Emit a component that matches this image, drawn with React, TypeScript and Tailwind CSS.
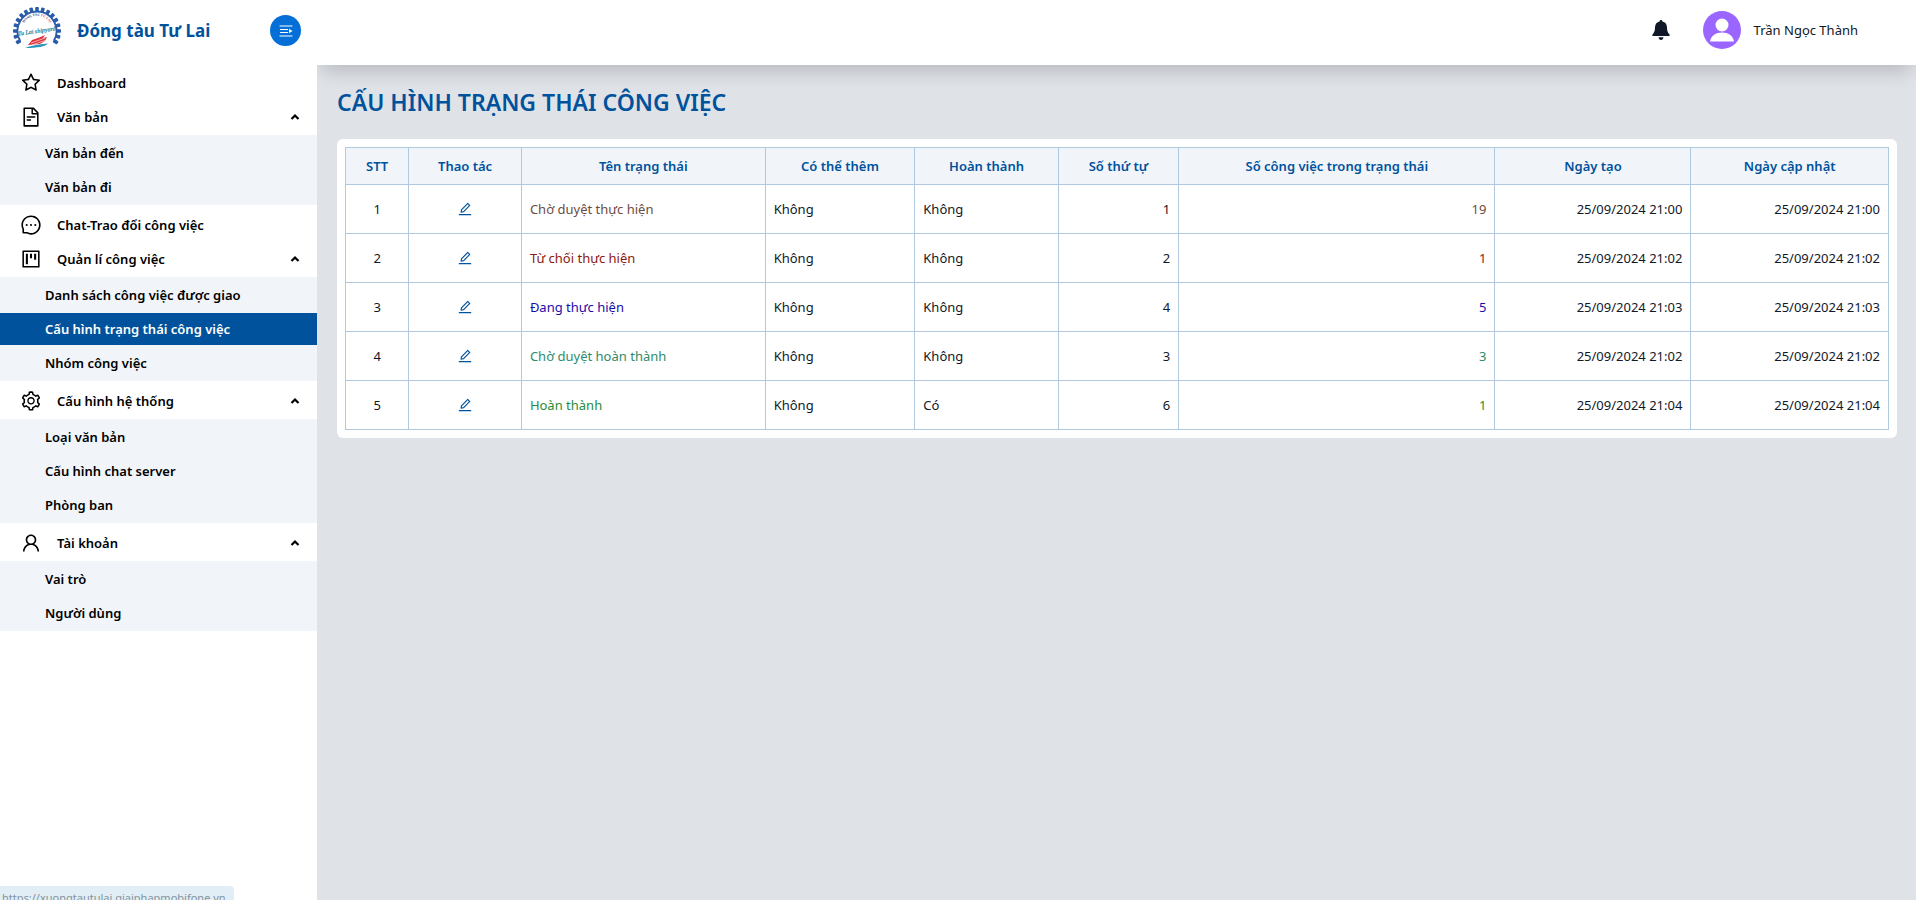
import React, { useState } from 'react';
import {
  AiOutlineStar,
  AiOutlineFileText,
  AiOutlineMessage,
  AiOutlineProject,
  AiOutlineSetting,
  AiOutlineUser,
  AiOutlineEdit,
} from 'react-icons/ai';
import type { IconType } from 'react-icons';

interface MenuItem {
  label: string;
  icon: IconType;
  children?: string[];
}

const menu: MenuItem[] = [
  { label: 'Dashboard', icon: AiOutlineStar },
  { label: 'Văn bản', icon: AiOutlineFileText, children: ['Văn bản đến', 'Văn bản đi'] },
  { label: 'Chat-Trao đổi công việc', icon: AiOutlineMessage },
  {
    label: 'Quản lí công việc',
    icon: AiOutlineProject,
    children: ['Danh sách công việc được giao', 'Cấu hình trạng thái công việc', 'Nhóm công việc'],
  },
  {
    label: 'Cấu hình hệ thống',
    icon: AiOutlineSetting,
    children: ['Loại văn bản', 'Cấu hình chat server', 'Phòng ban'],
  },
  { label: 'Tài khoản', icon: AiOutlineUser, children: ['Vai trò', 'Người dùng'] },
];

const columns = [
  { title: 'STT', width: 'w-[4.1%]' },
  { title: 'Thao tác', width: 'w-[7.3%]' },
  { title: 'Tên trạng thái', width: 'w-[15.8%]' },
  { title: 'Có thể thêm', width: 'w-[9.7%]' },
  { title: 'Hoàn thành', width: 'w-[9.3%]' },
  { title: 'Số thứ tự', width: 'w-[7.8%]' },
  { title: 'Số công việc trong trạng thái', width: 'w-[20.5%]' },
  { title: 'Ngày tạo', width: 'w-[12.7%]' },
  { title: 'Ngày cập nhật', width: 'w-[12.8%]' },
];

const rows = [
  { name: 'Chờ duyệt thực hiện', color: 'text-[#6d4c41]', canAdd: 'Không', done: 'Không', order: 1, total: 19, time: '25/09/2024 21:00' },
  { name: 'Từ chối thực hiện', color: 'text-[#8b1a10]', canAdd: 'Không', done: 'Không', order: 2, total: 1, time: '25/09/2024 21:02' },
  { name: 'Đang thực hiện', color: 'text-[#1a0dab]', canAdd: 'Không', done: 'Không', order: 4, total: 5, time: '25/09/2024 21:03' },
  { name: 'Chờ duyệt hoàn thành', color: 'text-[#2e8b6a]', canAdd: 'Không', done: 'Không', order: 3, total: 3, time: '25/09/2024 21:02' },
  { name: 'Hoàn thành', color: 'text-[#2a8c3a]', canAdd: 'Không', done: 'Có', order: 6, total: 1, time: '25/09/2024 21:04' },
];

function Logo() {
  const teeth = Array.from({ length: 17 }, (_, i) => -120 + i * 15);
  return (
    <svg viewBox="0 0 48 42" className="w-12 h-[42px] shrink-0" aria-hidden="true">
      {teeth.map((deg) => (
        <rect key={deg} x="22.2" y="0" width="3.6" height="5" rx="0.8" fill="#2a5caa" transform={`rotate(${deg} 24 24)`} />
      ))}
      <path d="M7.100 33.750A19.500 19.500 0 1 1 40.900 33.750" fill="none" stroke="#2a5caa" strokeWidth="1.8" />
      <path id="logo-arc" d="M10 18A15.200 15.200 0 0 1 38 18" fill="none" />
      <text fontSize="3.4" fontWeight="700" fill="#1f3d7a" fontFamily="Liberation Serif, serif" textAnchor="middle">
        <textPath href="#logo-arc" startOffset="50%">
          ĐÓNG TÀU <tspan fill="#d8343a">TƯ LAI</tspan>
        </textPath>
      </text>
      <text x="24" y="26" fontSize="6" fontStyle="italic" textAnchor="middle" fill="#0f7f9c" stroke="#0f7f9c" strokeWidth="0.2" fontFamily="Liberation Serif, serif" transform="rotate(-8 24 26)">
        Tu Lai shipyard
      </text>
      <path d="M15 38L19 33L25 31L32 28L30 31L34 30L32 34L27 37Z" fill="#e0343c" />
      <path d="M18 36L32 31M19 38L32 33.500" stroke="#fff" strokeWidth="0.6" />
      <path d="M12 41Q20 37.500 35 36.500Q31 41 12 41Z" fill="#2796b8" />
    </svg>
  );
}

function Chevron({ open }: { open: boolean }) {
  return (
    <svg viewBox="0 0 10 8" className={open ? 'w-[10px] h-2' : 'w-[10px] h-2 rotate-180'} aria-hidden="true">
      <path d="M1.5 6L5 2.5L8.5 6" fill="none" stroke="currentColor" strokeWidth="2.2" />
    </svg>
  );
}

export default function App() {
  const [active, setActive] = useState('Cấu hình trạng thái công việc');
  const [closed, setClosed] = useState<string[]>([]);

  const toggle = (label: string) =>
    setClosed((prev) => (prev.includes(label) ? prev.filter((l) => l !== label) : [...prev, label]));

  return (
    <div className="relative flex min-h-screen bg-[#dfe2e7] font-['Noto_Sans',sans-serif] text-[13px] leading-5 text-[#111827]">
      <aside className="z-20 w-[317px] shrink-0 bg-white">
        <div className="flex h-[65px] items-start pl-[13px] pr-4 pt-[7px]">
          <Logo />
          <a href="#" className="mt-3 ml-4 text-[17px] leading-6 font-bold text-[#00529c]">Đóng tàu Tư Lai</a>
          <button type="button" aria-label="Thu gọn menu" className="mt-2 ml-auto flex size-[31px] items-center justify-center rounded-full bg-[#046fd6] text-white">
            <svg viewBox="0 0 14 12" className="w-[14px] h-3" aria-hidden="true">
              <path d="M.5 1H13.500M1 4.500H9M1 7.500H9M.5 11H13.500" stroke="currentColor" strokeWidth="1.2" />
              <path d="M10 3.800L13.500 6L10 8.200Z" fill="currentColor" />
            </svg>
          </button>
        </div>

        <nav className="flex flex-col gap-[2px] pt-[2px] font-semibold text-black">
          {menu.map(({ label, icon: Icon, children }) => {
            const open = !closed.includes(label);
            return (
              <React.Fragment key={label}>
                <button type="button" onClick={() => children && toggle(label)} className="flex h-8 items-center pl-5 pr-[17px] text-left">
                  <Icon className="size-[22px]" />
                  <span className="ml-[15px] flex-1">{label}</span>
                  {children && <Chevron open={open} />}
                </button>
                {children && open && (
                  <ul className="mb-[2px] flex flex-col gap-[2px] bg-[#f1f5fa] py-[2px]">
                    {children.map((child) => (
                      <li key={child}>
                        <a
                          href="#"
                          onClick={() => setActive(child)}
                          className={`flex h-8 items-center pl-[45px] ${active === child ? 'bg-[#00529c] text-white' : ''}`}
                        >
                          {child}
                        </a>
                      </li>
                    ))}
                  </ul>
                )}
              </React.Fragment>
            );
          })}
        </nav>
      </aside>

      <div className="flex min-w-0 flex-1 flex-col">
        <header className="z-10 flex h-[65px] items-center justify-end bg-white pr-[58px] pb-[5px] shadow-[0_10px_20px_-5px_rgba(0,0,0,0.2)]">
          <button type="button" aria-label="Thông báo" className="mr-[33px]">
            <svg viewBox="0 0 18 20" className="w-[18px] h-5" fill="#111827" aria-hidden="true">
              <path d="M9 0C8.2 0 7.6.6 7.6 1.4C4.6 2 3 4.4 3 7.4C3 10.500 2.400 12.200.5 14.6C0 15.2.2 16 1 16H17C17.8 16 18 15.2 17.5 14.6C15.600 12.200 15 10.500 15 7.4C15 4.4 13.4 2 10.4 1.4C10.4.6 9.8 0 9 0Z" />
              <path d="M6.500 17.300H11.500C11.300 18.800 10.300 20 9 20S6.700 18.800 6.500 17.300Z" />
            </svg>
          </button>
          <svg viewBox="0 0 38 38" className="size-[38px]" aria-hidden="true">
            <circle cx="19" cy="19" r="19" fill="#9b66ff" />
            <circle cx="19" cy="14" r="6.500" fill="#fff" />
            <path d="M7 30.500C8 24.500 13 21.500 19 21.500S30 24.500 31 30.500Z" fill="#fff" />
          </svg>
          <span className="ml-[13px]">Trần Ngọc Thành</span>
        </header>

        <main className="flex-1 pt-[21px] pr-[19px] pl-5">
          <h1 className="text-[23px] leading-8 font-semibold text-[#00529c]">CẤU HÌNH TRẠNG THÁI CÔNG VIỆC</h1>
          <div className="mt-[21px] rounded-md bg-white p-2">
            <table className="w-full table-fixed border-collapse">
              <thead>
                <tr className="h-[37px] bg-[#f1f5fa] text-[#00529c]">
                  {columns.map((col) => (
                    <th key={col.title} className={`border border-[#b0c9df] px-2 font-semibold ${col.width}`}>{col.title}</th>
                  ))}
                </tr>
              </thead>
              <tbody>
                {rows.map((row, i) => (
                  <tr key={row.name} className="h-[49px] *:border *:border-[#b0c9df] *:px-2">
                    <td className="text-center">{i + 1}</td>
                    <td>
                      <button type="button" aria-label={`Sửa ${row.name}`} className="mx-auto block text-[#00529c]">
                        <AiOutlineEdit className="size-4" />
                      </button>
                    </td>
                    <td className={row.color}>{row.name}</td>
                    <td>{row.canAdd}</td>
                    <td>{row.done}</td>
                    <td className="text-right">{row.order}</td>
                    <td className={`text-right ${row.color}`}>{row.total}</td>
                    <td className="text-right">{row.time}</td>
                    <td className="text-right">{row.time}</td>
                  </tr>
                ))}
              </tbody>
            </table>
          </div>
        </main>
      </div>

      <div className="fixed bottom-0 left-0 z-30 h-[14px] overflow-hidden rounded-tr bg-[#e1eef5] pt-[2px] pr-2 pl-[2px] text-[11px] text-[#8393a0]">
        https://xuongtautulai.giaiphapmobifone.vn
      </div>
    </div>
  );
}
